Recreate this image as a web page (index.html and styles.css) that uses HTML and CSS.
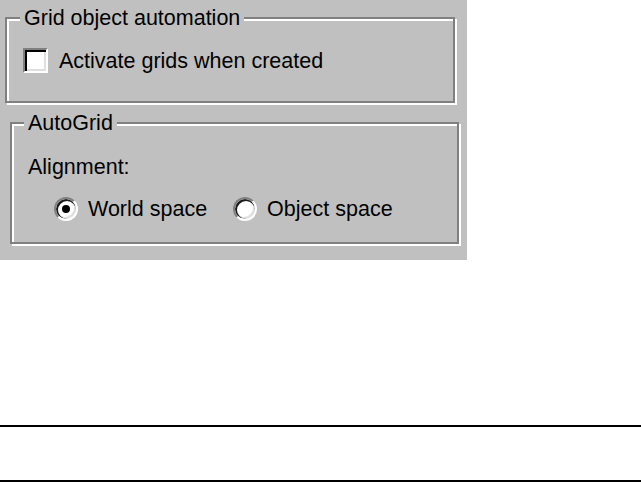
FILE: index.html
```html
<!DOCTYPE html>
<html>
<head>
<meta charset="utf-8">
<link rel="stylesheet" href="styles.css">
</head>
<body>
<div class="panel">
  <fieldset class="group group-grid">
    <legend>Grid object automation</legend>
    <label class="check-row">
      <span class="checkbox"></span>
      <span class="label-text">Activate grids when created</span>
    </label>
  </fieldset>
  <fieldset class="group group-auto">
    <legend>AutoGrid</legend>
    <div class="caption">Alignment:</div>
    <div class="radio-row">
      <label class="radio-item">
        <span class="radio checked"></span>
        <span class="label-text">World space</span>
      </label>
      <label class="radio-item">
        <span class="radio"></span>
        <span class="label-text">Object space</span>
      </label>
    </div>
  </fieldset>
</div>
<div class="rule rule-top"></div>
<div class="rule rule-bottom"></div>
</body>
</html>
```

FILE: styles.css
```css
html, body {
  margin: 0;
  padding: 0;
  background: #ffffff;
}

body {
  font-family: "Liberation Sans", Arial, sans-serif;
  font-size: 21.5px;
  color: #000;
  overflow: hidden;
}

.panel {
  width: 467px;
  height: 260px;
  background: #c0c0c0;
  box-sizing: border-box;
  padding-top: 7px;
}

.group {
  box-sizing: border-box;
  margin: 0;
  padding: 0;
  min-width: 0;
  border: 2px solid #808080;
  box-shadow: inset 2px 2px 0 #ffffff, 2px 2px 0 #ffffff;
}

.group legend {
  line-height: 22px;
  padding: 0 4px;
  background: #c0c0c0;
}

.group-grid {
  margin-left: 5px;
  width: 450px;
  height: 96px;
}

.group-grid legend {
  margin-left: 13px;
}

.group-auto {
  margin-left: 10px;
  margin-top: 9px;
  width: 449px;
  height: 132px;
}

.group-auto legend {
  margin-left: 12px;
}

.check-row {
  display: flex;
  align-items: center;
  height: 25px;
  margin-top: 19px;
  margin-left: 16px;
  line-height: 22px;
}

.checkbox {
  width: 25px;
  height: 25px;
  box-sizing: border-box;
  background: #fff;
  border: 2px solid;
  border-color: #808080 #ffffff #ffffff #808080;
  box-shadow: inset 2px 2px 0 #000000, inset -2px -2px 0 #dfdfdf;
}

.check-row .label-text {
  margin-left: 11px;
}

.caption {
  line-height: 22px;
  margin-top: 22px;
  margin-left: 16px;
}

.radio-row {
  display: flex;
  align-items: center;
  margin-top: 19px;
  margin-left: 42px;
  height: 24px;
  line-height: 22px;
}

.radio-item {
  display: flex;
  align-items: center;
}

.radio-item + .radio-item {
  margin-left: 26px;
}

.radio-item .label-text {
  margin-left: 10px;
}

.radio {
  position: relative;
  width: 24px;
  height: 24px;
  box-sizing: border-box;
  border-radius: 50%;
  background: #fff;
  border: 2px solid;
  border-color: #808080 #ffffff #ffffff #808080;
  box-shadow: inset 1px 1px 0 1px #1a1a1a, inset -1px -1px 0 1px #dfdfdf;
}

.radio.checked::after {
  content: "";
  position: absolute;
  left: 6px;
  top: 6px;
  width: 8px;
  height: 8px;
  border-radius: 50%;
  background: #000;
}

.rule {
  height: 2px;
  background: #000;
}

.rule-top {
  margin-top: 165px;
}

.rule-bottom {
  margin-top: 53px;
}
```
